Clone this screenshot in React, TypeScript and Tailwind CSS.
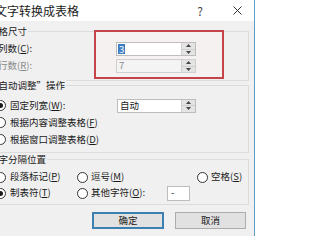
import React from 'react'

function Spin() {
  return (
    <div className="flex flex-col w-[14px] h-full border-l border-[#d0d0d0]">
      <div className="flex-1 flex items-center justify-center bg-[#e4e4e4] border-b border-[#cfcfcf]">
        <svg width="5" height="3" viewBox="0 0 5 3"><polygon points="2.5,0 5,3 0,3" fill="#444" /></svg>
      </div>
      <div className="flex-1 flex items-center justify-center bg-[#e4e4e4]">
        <svg width="5" height="3" viewBox="0 0 5 3"><polygon points="0,0 5,0 2.5,3" fill="#444" /></svg>
      </div>
    </div>
  )
}

function Radio({ checked = false }: { checked?: boolean }) {
  return (
    <span className="w-[11px] h-[11px] shrink-0 rounded-full border border-[#333] bg-white flex items-center justify-center">
      {checked && <span className="w-[5px] h-[5px] rounded-full bg-[#1a1a1a]" />}
    </span>
  )
}

function Key({ k }: { k: string }) {
  return (
    <>
      (<span className="underline">{k}</span>)
    </>
  )
}

function Group({ title, className, children }: { title: string; className: string; children: React.ReactNode }) {
  return (
    <div className={`relative border border-[#dcdcdc] ${className}`}>
      <span className="absolute -top-[7px] left-[7px] px-[1px] bg-[#f0f0f0] text-[9.5px] leading-[12px] text-[#1a1a1a]">
        {title}
      </span>
      {children}
    </div>
  )
}

export default function App() {
  return (
    <div className="w-[256px] h-[236px] overflow-hidden bg-white font-['Noto_Sans_CJK_SC',sans-serif] text-[#1a1a1a]">
      <div className="-ml-[24px] w-[279px] h-full flex flex-col border-r border-[#5b9ec6] bg-[#f0f0f0]">
        {/* Title bar */}
        <div className="h-[21px] shrink-0 bg-white flex items-center pl-[19px]">
          <span className="text-[12px] leading-none">文字转换成表格</span>
          <span className="ml-auto mr-[30px] text-[12px] leading-none text-[#444]">?</span>
          <svg className="mr-[12px]" width="9" height="9" viewBox="0 0 9 9" stroke="#333" strokeWidth="1">
            <path d="M0.5 0.5L8.5 8.5M8.5 0.5L0.5 8.5" />
          </svg>
        </div>

        <div className="flex flex-col pl-[4px] pr-[5px]">
          {/* Table size */}
          <Group title="表格尺寸" className="mt-[10px] h-[50px] pl-[17px] pt-[10px]">
            <div className="absolute -top-[2px] left-[113px] w-[130px] h-[49px] border-2 border-[#c4444a] bg-[#fff4f4]/30" />
            <div className="relative flex items-center h-[14px]">
              <span className="w-[118px] text-[9.5px] leading-none">列数<Key k="C" />:</span>
              <div className="w-[80px] h-[14px] flex bg-white border border-[#bdbdbd]">
                <div className="flex-1 flex items-center pl-[1px]">
                  <span className="bg-[#3b7cc2] text-white text-[9.5px] leading-[10px] px-[1px]">3</span>
                </div>
                <Spin />
              </div>
            </div>
            <div className="relative flex items-center h-[14px] mt-[3px]">
              <span className="w-[118px] text-[9.5px] leading-none text-[#8a8a8a]">行数<Key k="R" />:</span>
              <div className="w-[80px] h-[14px] flex bg-[#f4f4f4] border border-[#cfcfcf]">
                <div className="flex-1 flex items-center pl-[2px] text-[9.5px] leading-none text-[#8a8a8a]">7</div>
                <Spin />
              </div>
            </div>
          </Group>

          {/* Autofit */}
          <Group title="“自动调整”操作" className="mt-[4px] h-[68px] pl-[14px] pt-[11px]">
            <div className="flex items-center h-[17px]">
              <div className="w-[122px] flex items-center gap-[4px] text-[9.5px] leading-none">
                <Radio checked />
                <span>固定列宽<Key k="W" />:</span>
              </div>
              <div className="w-[79px] h-[14px] flex bg-white border border-[#bdbdbd]">
                <div className="flex-1 flex items-center pl-[2px] text-[9.5px] leading-none">自动</div>
                <Spin />
              </div>
            </div>
            <div className="flex items-center gap-[4px] h-[17px] text-[9.5px] leading-none">
              <Radio />
              <span>根据内容调整表格<Key k="F" /></span>
            </div>
            <div className="flex items-center gap-[4px] h-[17px] text-[9.5px] leading-none">
              <Radio />
              <span>根据窗口调整表格<Key k="D" /></span>
            </div>
          </Group>

          {/* Separator */}
          <Group title="文字分隔位置" className="mt-[6px] h-[46px] pl-[14px] pt-[9px]">
            <div className="grid grid-cols-[82px_120px_1fr] h-[16px] items-center text-[9.5px] leading-none">
              <div className="flex items-center gap-[4px]"><Radio /><span>段落标记<Key k="P" /></span></div>
              <div className="flex items-center gap-[3px]"><Radio /><span>逗号<Key k="M" /></span></div>
              <div className="flex items-center gap-[3px]"><Radio /><span>空格<Key k="S" /></span></div>
            </div>
            <div className="grid grid-cols-[82px_120px_1fr] h-[16px] items-center text-[9.5px] leading-none">
              <div className="flex items-center gap-[4px]"><Radio checked /><span>制表符<Key k="T" /></span></div>
              <div className="flex items-center gap-[3px]">
                <Radio />
                <span className="w-[73px]">其他字符<Key k="O" />:</span>
                <div className="w-[23px] h-[15px] bg-white border border-[#bdbdbd] flex items-center pl-[3px]">-</div>
              </div>
            </div>
          </Group>
        </div>

        {/* Buttons */}
        <div className="mt-[7px] flex justify-end gap-[11px] pr-[8px]">
          <button className="w-[72px] h-[17px] bg-[#e1e1e1] border-2 border-[#3c7fb1] text-[9.5px] leading-none">确定</button>
          <button className="w-[71px] h-[17px] bg-[#e1e1e1] border border-[#adadad] text-[9.5px] leading-none">取消</button>
        </div>
      </div>
    </div>
  )
}
